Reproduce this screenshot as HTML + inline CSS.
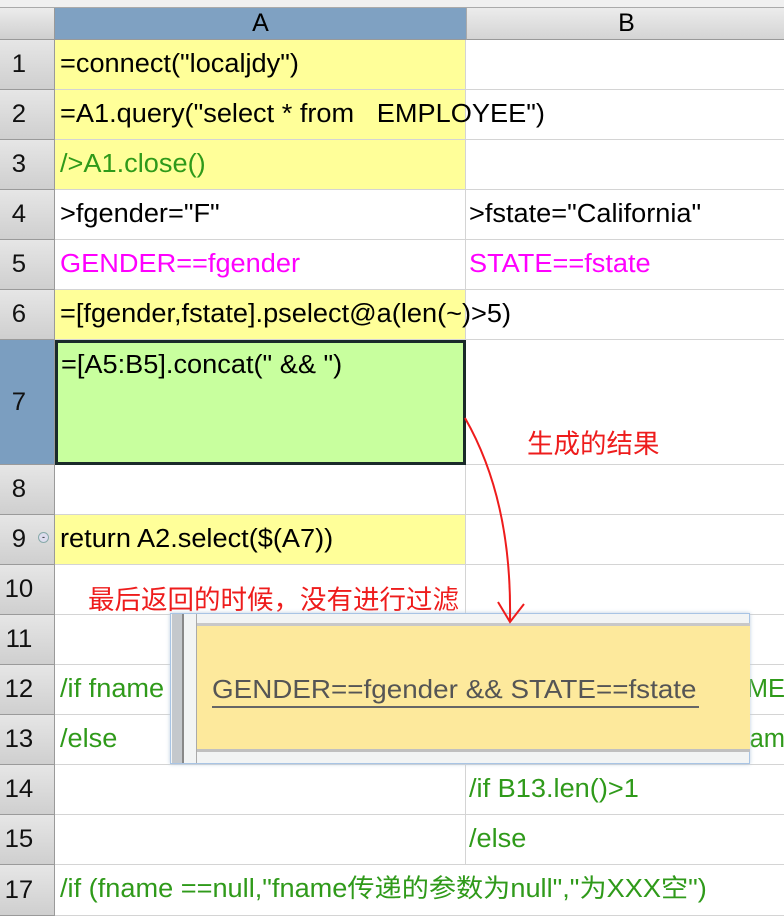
<!DOCTYPE html>
<html><head><meta charset="utf-8"><style>
body{margin:0;width:784px;height:916px;overflow:hidden;background:#fff;font-family:"Liberation Sans","Noto Sans CJK SC",sans-serif;position:relative}
.a{position:absolute;box-sizing:border-box}
.rh{position:absolute;left:0;width:55px;background:linear-gradient(#e6e6e6,#cfcfcf);border-bottom:1px solid #9a9a9a;border-right:1px solid #9a9a9a;box-sizing:border-box;font-size:25px;color:#111;display:flex;align-items:center;justify-content:center;padding-right:16px}
.rh span{display:inline-block;transform:scaleX(1.03)}
.c{position:absolute;box-sizing:border-box;border-right:1px solid #d4d4d4;border-bottom:1px solid #d4d4d4;font-size:25.5px;line-height:48px;padding-left:5px;white-space:nowrap}
.c span,.s{display:inline-block;transform:scaleX(1.065);transform-origin:left center}
.A{left:55px;width:411px}.B{left:466px;width:320px;padding-left:3px}
.y{background:#ffff99}.g{color:#2f9a1a}.m{color:#ff00ff}
.red{color:#ee1c1c;position:absolute;font-size:26.5px;white-space:nowrap}
</style></head><body>
<div class="a" style="left:0;top:0;width:784px;height:8px;background:#f0f0f0;border-bottom:1px solid #aaa"></div>
<div class="a" style="left:0;top:8px;width:55px;height:32px;background:linear-gradient(#ececec,#cfcfcf);border-right:1px solid #999;border-bottom:1px solid #999"></div>
<div class="a" style="left:55px;top:8px;width:411px;height:32px;background:#7fa1c2;border-bottom:1px solid #999;font-size:25px;text-align:center;line-height:30px">A</div>
<div class="a" style="left:466px;top:8px;width:320px;height:32px;background:linear-gradient(#ececec,#d4d4d4);border-left:1px solid #aaa;border-bottom:1px solid #999;font-size:25px;text-align:center;line-height:30px">B</div>

<div class="rh" style="top:40px;height:50px"><span>1</span></div>
<div class="rh" style="top:90px;height:50px"><span>2</span></div>
<div class="rh" style="top:140px;height:50px"><span>3</span></div>
<div class="rh" style="top:190px;height:50px"><span>4</span></div>
<div class="rh" style="top:240px;height:50px"><span>5</span></div>
<div class="rh" style="top:290px;height:50px"><span>6</span></div>
<div class="rh" style="top:340px;height:125px;background:#7b9ec0"><span>7</span></div>
<div class="rh" style="top:465px;height:50px"><span>8</span></div>
<div class="rh" style="top:515px;height:50px"><span>9</span></div>
<div class="a" style="left:38px;top:532px;width:11px;height:11px;border-radius:50%;border:1px solid #8aa;background:#dde;font-size:9px;line-height:8px;text-align:center">-</div>
<div class="rh" style="top:565px;height:50px"><span>10</span></div>
<div class="rh" style="top:615px;height:50px"><span>11</span></div>
<div class="rh" style="top:665px;height:50px"><span>12</span></div>
<div class="rh" style="top:715px;height:50px"><span>13</span></div>
<div class="rh" style="top:765px;height:50px"><span>14</span></div>
<div class="rh" style="top:815px;height:50px"><span>15</span></div>
<div class="rh" style="top:865px;height:51px"><span>17</span></div>

<div class="c B" style="top:40px;height:50px"></div><div class="c A y" style="top:40px;height:50px"><span>=connect("localjdy")</span></div>
<div class="c B" style="top:90px;height:50px"></div><div class="c A y" style="top:90px;height:50px;overflow:visible"><span>=A1.query("select * from &nbsp; EMPLOYEE")</span></div>
<div class="c A y g" style="top:140px;height:50px"><span>/&gt;A1.close()</span></div><div class="c B" style="top:140px;height:50px"></div>
<div class="c A" style="top:190px;height:50px"><span>&gt;fgender="F"</span></div><div class="c B" style="top:190px;height:50px"><span>&gt;fstate="California"</span></div>
<div class="c A m" style="top:240px;height:50px"><span>GENDER==fgender</span></div><div class="c B m" style="top:240px;height:50px"><span>STATE==fstate</span></div>
<div class="c B" style="top:290px;height:50px"></div>
<div class="c A y" style="top:290px;height:50px;overflow:visible"><span>=[fgender,fstate].pselect@a(len(~)&gt;5)</span></div>
<div class="c A" style="top:340px;height:125px;background:#c8ff9e;border:3px solid #1a2a2a;line-height:44px;padding-left:3px"><span>=[A5:B5].concat(" &amp;&amp; ")</span></div><div class="c B" style="top:340px;height:125px"></div>
<div class="c A" style="top:465px;height:50px"></div><div class="c B" style="top:465px;height:50px"></div>
<div class="c A y" style="top:515px;height:50px"><span>return A2.select($(A7))</span></div><div class="c B" style="top:515px;height:50px"></div>
<div class="c A" style="top:565px;height:50px"></div><div class="c B" style="top:565px;height:50px"></div>
<div class="c A" style="top:615px;height:50px"></div><div class="c B" style="top:615px;height:50px"></div>
<div class="c A g" style="top:665px;height:50px"><span>/if fname</span></div><div class="c B g" style="top:665px;height:50px;text-align:right;padding-right:0">ME</div>
<div class="c A g" style="top:715px;height:50px"><span>/else</span></div><div class="c B g" style="top:715px;height:50px;text-align:right;padding-right:0">am</div>
<div class="c A" style="top:765px;height:50px"></div><div class="c B g" style="top:765px;height:50px"><span>/if B13.len()&gt;1</span></div>
<div class="c A" style="top:815px;height:50px"></div><div class="c B g" style="top:815px;height:50px"><span>/else</span></div>
<div class="c B" style="top:865px;height:51px"></div>
<div class="c A g" style="top:865px;height:51px;overflow:visible;border-right:none"><span>/if (fname ==null,"fname传递的参数为null","为XXX空")</span></div>

<div class="red" style="left:527px;top:422px">生成的结果</div>
<div class="red" style="left:88px;top:578px">最后返回的时候，没有进行过滤</div>

<div class="a" style="left:170px;top:613px;width:580px;height:151px;background:#f2f4f4;border:1px solid #a8c4e4;box-shadow:0 0 4px #bcd"></div>
<div class="a" style="left:172px;top:614px;width:10px;height:149px;background:#c4c8cc"></div>
<div class="a" style="left:182px;top:614px;width:2px;height:149px;background:#888"></div>
<div class="a" style="left:196px;top:614px;width:1px;height:149px;background:#aaa"></div>
<div class="a" style="left:197px;top:623px;width:553px;height:3px;background:#c8c8c8"></div>
<div class="a" style="left:197px;top:626px;width:553px;height:123px;background:#fde99c"></div>
<div class="a" style="left:197px;top:749px;width:553px;height:3px;background:#c0c0c0"></div>
<div class="a" style="left:212px;top:674px;font-size:26px;color:#555;line-height:30px;white-space:nowrap"><span class="s" style="transform:scaleX(1.07)">GENDER==fgender &amp;&amp; STATE==fstate</span></div>
<div class="a" style="left:212px;top:706px;width:487px;height:2px;background:#666"></div>

<svg class="a" style="left:0;top:0" width="784" height="916"><path d="M465 418 Q 512 500 510 620" fill="none" stroke="#ee1c1c" stroke-width="2"/><path d="M498 602 L510 622 L524 604" fill="none" stroke="#ee1c1c" stroke-width="2"/></svg>
</body></html>
